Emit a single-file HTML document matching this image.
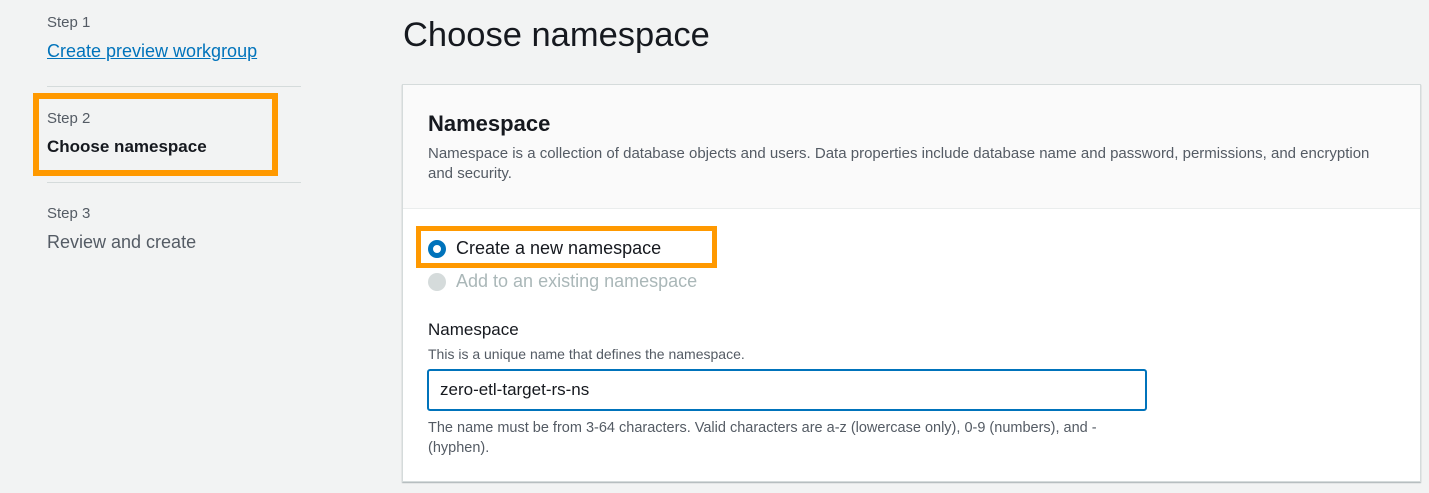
<!DOCTYPE html><html><head><style>
body{margin:0;width:1429px;height:493px;background:#f2f3f3;font-family:"Liberation Sans",sans-serif;position:relative;overflow:hidden;color:#16191f}
.a{position:absolute;white-space:nowrap}
.g{color:#545b64}
</style></head><body>
<div class="a g" style="left:47px;top:14px;font-size:15px">Step 1</div>
<div class="a" style="left:47px;top:41px;font-size:18px;color:#0073bb;text-decoration:underline">Create preview workgroup</div>
<div class="a" style="left:47px;top:86px;width:254px;border-top:1px solid #d5dbdb"></div>
<div class="a" style="left:33px;top:93px;width:233px;height:71px;border:6px solid #ff9900"></div>
<div class="a g" style="left:47px;top:110px;font-size:15px">Step 2</div>
<div class="a" style="left:47px;top:137px;font-size:17px;font-weight:bold">Choose namespace</div>
<div class="a" style="left:47px;top:182px;width:254px;border-top:1px solid #d5dbdb"></div>
<div class="a g" style="left:47px;top:205px;font-size:15px">Step 3</div>
<div class="a g" style="left:47px;top:232px;font-size:18px">Review and create</div>
<div class="a" style="left:403px;top:16px;font-size:34.5px">Choose namespace</div>
<div class="a" style="left:402px;top:84px;width:1017px;height:396px;background:#fff;border:1px solid #d5dbdb;box-shadow:0 1px 1px rgba(0,28,36,.3)"></div>
<div class="a" style="left:403px;top:85px;width:1017px;height:123px;background:#fafafa;border-bottom:1px solid #eaeded"></div>
<div class="a" style="left:428px;top:111px;font-size:22px;font-weight:bold">Namespace</div>
<div class="a g" style="left:428px;top:144px;font-size:15px;line-height:20px;white-space:normal;width:968px">Namespace is a collection of database objects and users. Data properties include database name and password, permissions, and encryption and security.</div>
<div class="a" style="left:416px;top:226px;width:291px;height:32px;border:5px solid #ff9900"></div>
<div class="a" style="left:428px;top:240px;width:8px;height:8px;border:5px solid #0073bb;border-radius:50%;background:#fff"></div>
<div class="a" style="left:456px;top:238px;font-size:18px">Create a new namespace</div>
<div class="a" style="left:428px;top:273px;width:18px;height:18px;border-radius:50%;background:#d5dbdb"></div>
<div class="a" style="left:456px;top:271px;font-size:18px;color:#aab7b8">Add to an existing namespace</div>
<div class="a" style="left:428px;top:320px;font-size:17px">Namespace</div>
<div class="a g" style="left:428px;top:346px;font-size:14px">This is a unique name that defines the namespace.</div>
<div class="a" style="left:427px;top:369px;width:716px;height:38px;border:2px solid #0073bb;border-radius:3px"></div>
<div class="a" style="left:440px;top:380px;font-size:17px">zero-etl-target-rs-ns</div>
<div class="a g" style="left:428px;top:418px;font-size:14.5px;line-height:20px">The name must be from 3-64 characters. Valid characters are a-z (lowercase only), 0-9 (numbers), and -<br>(hyphen).</div>
</body></html>
